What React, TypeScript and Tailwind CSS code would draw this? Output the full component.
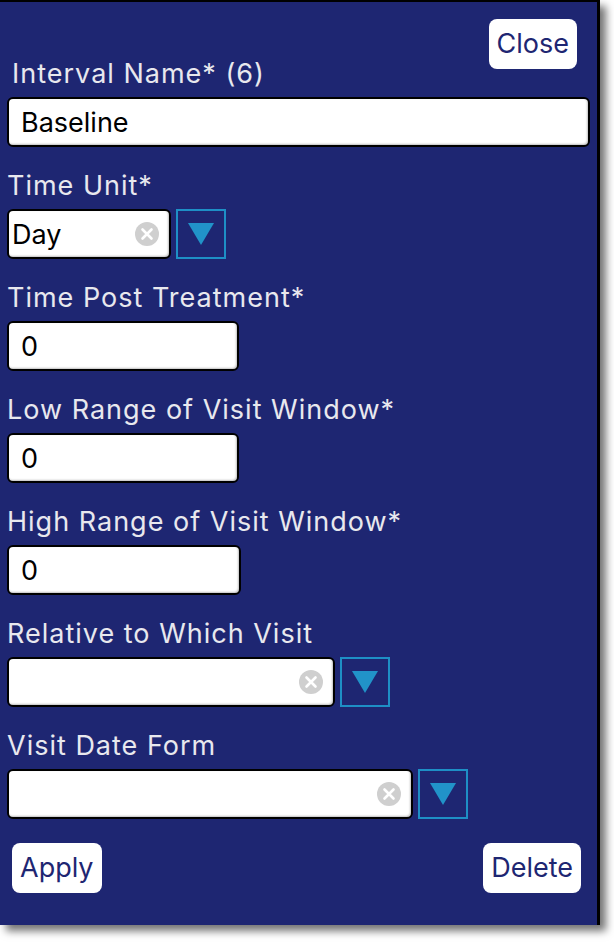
import React from 'react';

const labelCls = "block text-[27px] leading-[30px] tracking-[1px] text-[#e8e8ee] pt-[2px] mb-[8px]";
const inputBox = "h-[50px] bg-white border-2 border-black rounded-[6px] flex items-center pt-[2px] shadow-[inset_-1px_-1px_2px_rgba(0,0,0,0.25)]";
const btnCls = "h-[50px] px-[8px] pt-[1px] bg-white rounded-[8px] text-[27px] text-[#1e2672]";

function ClearIcon() {
  return (
    <svg width="24" height="24" viewBox="0 0 24 24" className="shrink-0 -mt-[2px]">
      <circle cx="12" cy="12" r="12" fill="#cfcfcf" />
      <path d="M7.5 7.5 L16.5 16.5 M16.5 7.5 L7.5 16.5" stroke="#fff" strokeWidth="2.6" strokeLinecap="round" />
    </svg>
  );
}

function DropButton() {
  return (
    <button className="w-[50px] h-[50px] border-2 border-[#1e8fc6] flex items-center justify-center">
      <svg width="26" height="22" viewBox="0 0 26 22">
        <polygon points="0,0 26,0 13,22" fill="#2193c9" />
      </svg>
    </button>
  );
}

function TextField({ label, value, width }: { label: string; value: string; width: string }) {
  return (
    <div className="flex flex-col">
      <label className={labelCls}>{label}</label>
      <div className={`${inputBox} ${width} px-[12px]`}>
        <span className="text-[27px] text-black">{value}</span>
      </div>
    </div>
  );
}

function SelectField({ label, value, width }: { label: string; value: string; width: string }) {
  return (
    <div className="flex flex-col">
      <label className={labelCls}>{label}</label>
      <div className="flex items-center gap-[5px]">
        <div className={`${inputBox} ${width} pl-[3px] pr-[10px] justify-between`}>
          <span className="text-[27px] text-black">{value}</span>
          <ClearIcon />
        </div>
        <DropButton />
      </div>
    </div>
  );
}

export default function App() {
  return (
    <div className="min-h-screen bg-white" style={{ fontFamily: 'Inter, "Noto Sans", sans-serif' }}>
      <div className="w-[600px] h-[925px] bg-[#1e2672] border-t-2 border-r-[3px] border-black shadow-[6px_6px_8px_rgba(0,0,0,0.55)] pt-[17px] pl-[7px] pr-[7px] flex flex-col">
        <div className="flex items-end justify-between">
          <label className="text-[27px] leading-[30px] tracking-[1px] text-[#e8e8ee] ml-[5px] pt-[2px] mb-[8px]">Interval Name* (6)</label>
          <button className={`${btnCls} mb-[28px] mr-[13px]`}>Close</button>
        </div>
        <div className="flex flex-col gap-[22px]">
          <div className={`${inputBox} w-full px-[12px]`}>
            <span className="text-[27px] text-black">Baseline</span>
          </div>
          <SelectField label="Time Unit*" value="Day" width="w-[164px]" />
          <TextField label="Time Post Treatment*" value="0" width="w-[232px]" />
          <TextField label="Low Range of Visit Window*" value="0" width="w-[232px]" />
          <TextField label="High Range of Visit Window*" value="0" width="w-[234px]" />
          <SelectField label="Relative to Which Visit" value="" width="w-[328px]" />
          <SelectField label="Visit Date Form" value="" width="w-[406px]" />
        </div>
        <div className="flex justify-between mt-[24px] pl-[5px] pr-[9px]">
          <button className={btnCls}>Apply</button>
          <button className={btnCls}>Delete</button>
        </div>
      </div>
    </div>
  );
}
